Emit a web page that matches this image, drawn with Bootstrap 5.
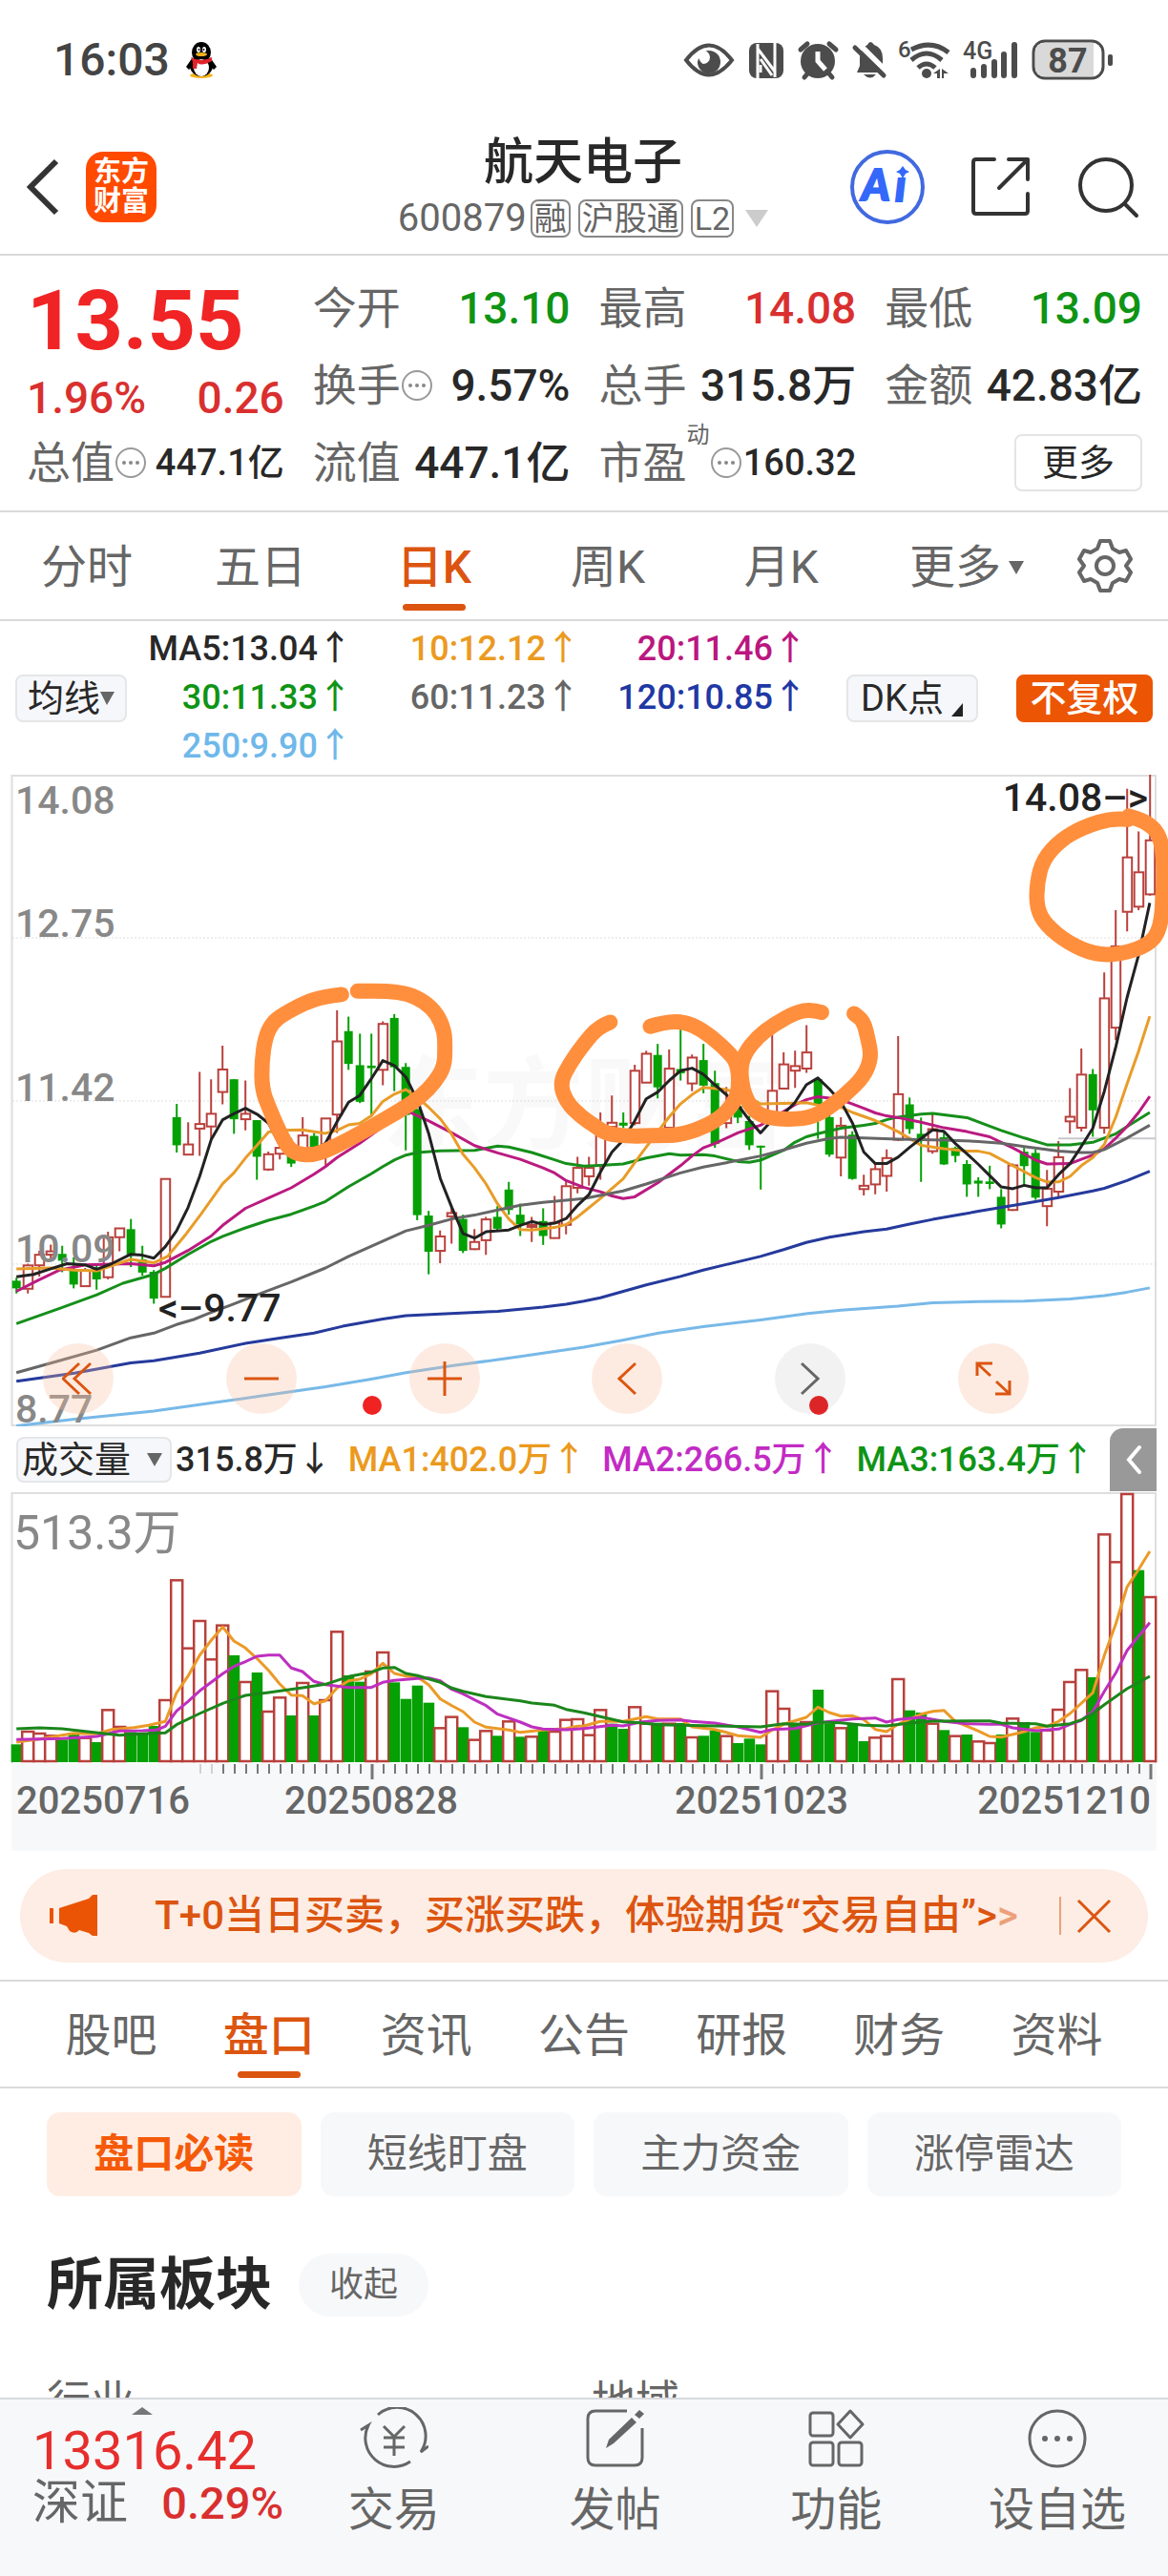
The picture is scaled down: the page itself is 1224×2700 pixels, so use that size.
<!DOCTYPE html>
<html lang="zh-CN">
<head>
<meta charset="utf-8">
<meta name="viewport" content="width=device-width, initial-scale=1">
<title>航天电子 600879</title>
<link rel="stylesheet" href="https://cdn.jsdelivr.net/npm/bootstrap@5.3.0/dist/css/bootstrap.min.css">
<style>
:root{--up:#d9302f;--down:#0f9415;--accent:#dc5510;--ink:#282828;--dim:#666}
body{font-family:Roboto,"Noto Sans CJK SC",sans-serif;color:var(--ink);background:#fff;line-height:1;overflow-x:hidden}
button{background:none;border:0;padding:0;color:inherit;font:inherit}
svg{display:block}
.scroller{overflow-y:auto;overflow-x:hidden;min-height:0;scrollbar-width:none}
.scroller::-webkit-scrollbar{display:none}
.rule-b{border-bottom:2px solid #dadada}
.t-dim{color:var(--dim)}.t-up{color:var(--up)}.t-down{color:var(--down)}
/* status bar and title bar */
.statusbar{height:126px;padding:0 56px;color:#444}
.clock{font-size:48px;font-weight:500}
.titlebar{height:142px;padding:0 30px 0 28px}
.side{width:300px}
.logo-tile{width:74px;height:74px;margin-left:27px;border-radius:18px;background:#ff4a00;color:#fff;font-size:29px;font-weight:700;line-height:31px}
.stock-name{font-size:52px;line-height:56px;font-weight:500;margin:0 0 10px}
.stock-code{font-size:40px}
.tag-box{font-size:34px;line-height:36px;border:2px solid #888;border-radius:8px;padding:0 2px}
/* quote */
.quote{gap:30px;padding:14px 27px 10px 28px;font-size:46px}
.quote>div{flex:1 1 0;min-width:0}
.qrow{height:81px;white-space:nowrap}
.num{font-weight:500}
.price{height:108px;font-size:88px;font-weight:700;color:#f02424}
.pct{height:54px}
.f-sm{font-size:38px}
.more-btn{border:2px solid #e4e4e4;border-radius:8px;width:134px;height:60px;font-size:38px}
/* tabs */
.tabs-k,.tabs-i{height:114px;font-size:48px}
.tabs-k a,.tabs-i a{position:relative;color:var(--dim);text-decoration:none;height:100%;padding-top:4px;display:flex;align-items:center;justify-content:center}
.tabs-k a{flex:0 0 calc((100% - 132px)/6)}
.tabs-i a{flex:1 1 0}
.tabs-k a.on,.tabs-i a.on{color:var(--accent);font-weight:500}
.on::after{content:"";position:absolute;left:50%;bottom:9px;width:66px;height:7px;margin-left:-33px;border-radius:4px;background:var(--accent)}
.gear{width:132px}
.tabs-i{padding:0 34px}
/* moving-average legend */
.legend-row{height:161px;padding:4px 16px}
.chip{height:50px;border:2px solid #e4e6e8;border-radius:8px;background:#f6f7fa;font-size:38px}
.chip-ma{width:117px}.chip-dk{width:138px}
.chip-fq{width:143px;background:#ec5503;border-color:#ec5503;color:#fff;font-weight:500}
.ma-grid{display:grid;grid-template-columns:236px 239px 238px;font-size:36px;line-height:51px;text-align:right;font-weight:500}
/* charts */
.chart-wrap{position:relative}
.chart-wrap svg text,.vol-wrap svg text{font-family:Roboto,"Noto Sans CJK SC",sans-serif}
.chart-tools{position:absolute;left:45px;right:146px;bottom:13px}
.chart-tools button{width:74px;height:74px;border-radius:50%;background:rgba(250,190,155,.3);display:flex;align-items:center;justify-content:center}
.chart-tools .off{background:rgba(0,0,0,.05)}
.vol-row{height:69px;padding:0 12px 0 17px;font-size:36px;white-space:nowrap}
.vol-select{width:163px;height:48px;border:2px solid #e4e6e8;border-radius:8px;background:#f6f7fa;font-size:38px}
.drawer{width:49px;height:66px;background:#999;border-radius:14px 0 0 0}
/* notice */
.notice{margin:19px 21px 18px;height:98px;border-radius:49px;background:#fdede4;color:var(--accent);font-size:42px;padding:0 38px 0 30px}
.notice a{color:inherit;text-decoration:none;white-space:nowrap;font-weight:500}
.section-rule{border-top:2px solid #dadada}
.pills{padding:25px 49px 0;gap:20px}
.pills button{flex:1 1 0;height:88px;border-radius:14px;background:#f7f8fa;color:var(--dim);font-size:42px}
.pills .sel{background:#ffede4;color:#f55a0a;font-weight:700}
.sector-head{padding:0 49px;margin-top:60px;gap:28px}
.sector-head h2{font-size:59px;font-weight:700;margin:0;line-height:66px}
.fold{width:136px;height:66px;border-radius:33px;background:#f7f8fa;color:var(--dim);font-size:36px}
.sector-cols{padding:0 49px;margin-top:66px;font-size:46px;line-height:46px}
/* bottom bar */
.dock{height:187px;background:#f7f8fa;border-top:2px solid #d8dade}
.dock-index{width:297px;padding:4px 0 0 34px}
.dock a{flex:1 1 0;color:var(--dim);text-decoration:none;font-size:48px;display:flex;flex-direction:column;align-items:center;gap:18px;padding-top:8px}
.idx{font-size:56px;line-height:56px;color:#e62e2c}
.idx-name{font-size:50px;line-height:52px}
.idx-pct{font-size:47px;color:var(--up);font-weight:500}
</style>
<script src="https://cdn.jsdelivr.net/npm/bootstrap@5.3.0/dist/js/bootstrap.bundle.min.js"></script>
</head>
<body>
<div class="d-flex flex-column vh-100">
<main class="scroller flex-grow-1">

<div class="statusbar d-flex align-items-center justify-content-between">
  <div class="d-flex align-items-center gap-3"><span class="clock">16:03</span>
    <svg width="34" height="38" viewBox="0 0 34 38" aria-hidden="true">
      <ellipse cx="17" cy="35" rx="12" ry="3" fill="#f5b21a"/>
      <path d="M8 16 L1 26 L4 29 L8 25Z M26 16 L33 26 L30 29 L26 25Z" fill="#000"/>
      <ellipse cx="17" cy="25" rx="12" ry="11" fill="#000"/><ellipse cx="17" cy="11" rx="10" ry="11" fill="#000"/>
      <ellipse cx="17" cy="27" rx="8" ry="9" fill="#fff"/>
      <path d="M6 16 Q17 22 28 16 V20 Q17 26 13 22 L12 28 H8 V21Z" fill="#e0222a"/>
      <ellipse cx="14" cy="8" rx="2" ry="3" fill="#fff"/><ellipse cx="20" cy="8" rx="2" ry="3" fill="#fff"/>
      <circle cx="14.500" cy="8" r="1" fill="#000"/><circle cx="19.500" cy="8" r="1" fill="#000"/>
      <ellipse cx="17" cy="13" rx="6" ry="2" fill="#f5b21a"/></svg>
  </div>
  <svg width="454" height="50" viewBox="0 0 454 50" fill="#4c4c4c" aria-hidden="true">
    <path d="M5 25 Q29 -6 53 25 Q29 56 5 25Z" fill="none" stroke="#4c4c4c" stroke-width="4"/>
    <circle cx="29" cy="27" r="12"/><circle cx="23" cy="22" r="7" fill="#fff"/>
    <path d="M18 23 A12 12 0 0 0 29 39 L31 31 Q22 32 18 23Z"/>
    <rect x="71" y="7" width="36" height="37" rx="8"/>
    <path d="M80 44 V8 M98 43 V7 M80 13 L98 37" fill="none" stroke="#fff" stroke-width="3"/><path d="M83 24 L95 41 M83 30 V38" stroke="#fff" stroke-width="3"/>
    <circle cx="143" cy="26" r="18"/><path d="M125 14 L132 8 M162 14 L155 8 M129 43 L134 37 M158 43 L153 37" stroke="#4c4c4c" stroke-width="5" stroke-linecap="round"/>
    <path d="M143 16 V26 L151 35" fill="none" stroke="#fff" stroke-width="5"/>
    <path d="M184 38 L187 31 V22 Q188 12 195 9 Q198 3 202 9 Q211 12 211 23 V30 L214 38Z"/><path d="M191 40 H204 Q198 47 191 40Z"/>
    <path d="M184 6 L215 37" stroke="#fff" stroke-width="6"/><path d="M182 12 L212 41" stroke="#4c4c4c" stroke-width="5" stroke-linecap="round"/>
    <text x="227" y="22" font-size="24" font-weight="500">6</text>
    <g fill="none" stroke="#4c4c4c" stroke-width="5"><path d="M241 14 Q262 3 280 17"/><path d="M241 25 Q257 11 273 25"/><path d="M248 33 Q257 25 266 33"/></g>
    <circle cx="257" cy="39" r="5"/><path d="M264 39 L271 34 V44 H268 V39Z M273 34 L280 39 H275 V44 H273Z"/>
    <text x="295" y="24" font-size="25" font-weight="500">4G</text>
    <path d="M306 36 V41 M317 32 V41 M328 27 V41 M338 19 V41 M349 9 V41" stroke="#4c4c4c" stroke-width="6" stroke-linecap="round"/>
    <rect x="369" y="5" width="73" height="39" rx="12" fill="#fff" stroke="#4c4c4c" stroke-width="3"/><path d="M381 7 H432 V42 H381 Q371 42 371 33 V16 Q371 7 381 7Z" fill="#d9d9d9"/>
    <rect x="447" y="19" width="5" height="12" rx="2"/><text x="405" y="38" font-size="36" font-weight="700" text-anchor="middle">87</text>
  </svg>
</div>

<header class="titlebar rule-b d-flex align-items-center justify-content-between">
  <div class="side d-flex align-items-center">
    <button aria-label="返回"><svg width="35" height="60" viewBox="0 0 35 60"><path d="M31 3 L4 30 L31 57" fill="none" stroke="#333" stroke-width="6"/></svg></button>
    <div class="logo-tile d-flex flex-column align-items-center justify-content-center"><span>东方</span><span>财富</span></div>
  </div>
  <div class="d-flex flex-column align-items-center">
    <h1 class="stock-name">航天电子</h1>
    <div class="d-flex align-items-center gap-1 t-dim">
      <span class="stock-code">600879</span><span class="tag-box">融</span><span class="tag-box ms-1">沪股通</span><span class="tag-box ms-1">L2</span>
      <svg class="ms-2" width="24" height="18"><path d="M0 0 H24 L12 18Z" fill="#ccc"/></svg>
    </div>
  </div>
  <div class="side d-flex align-items-center justify-content-end gap-5">
    <button aria-label="Ai"><svg width="80" height="80" viewBox="0 0 80 80"><circle cx="40" cy="40" r="37" fill="none" stroke="#4169e0" stroke-width="4"/><g font-family="Lato, sans-serif" font-weight="900" font-size="45" fill="#3468fa" stroke="#3468fa" stroke-width="2" font-style="italic"><text x="13" y="54">A</text><text x="48" y="55">ı</text></g><path d="M56 18 L59 22 L63 24 L59 26 L56 31 L53 26 L49 24 L53 22Z" fill="#3468fa"/></svg></button>
    <button aria-label="分享"><svg width="62" height="64" viewBox="0 0 62 64" fill="none" stroke="#333" stroke-width="4" stroke-linecap="round" stroke-linejoin="round"><path d="M24 3 H5 Q2 3 2 6 V57 Q2 60 5 60 H56 Q59 60 59 57 V39 M39 3 H59 V24 M59 3 L29 33"/></svg></button>
    <button aria-label="搜索"><svg width="66" height="66" viewBox="0 0 66 66" fill="none" stroke="#333" stroke-width="4" stroke-linecap="round"><circle cx="31" cy="31" r="27"/><path d="M51 51 L63 63"/></svg></button>
  </div>
</header>

<section class="quote rule-b d-flex">
  <div>
    <div class="price d-flex align-items-center">13.55</div>
    <div class="pct num d-flex align-items-center justify-content-between t-up"><span>1.96%</span><span>0.26</span></div>
    <div class="qrow d-flex align-items-center"><span class="t-dim">总值</span><svg width="34" height="34" viewBox="0 0 34 34"><use href="#info"/></svg><span class="num f-sm ms-auto">447.1亿</span></div>
  </div>
  <div>
    <div class="qrow d-flex align-items-center justify-content-between"><span class="t-dim">今开</span><span class="num t-down">13.10</span></div>
    <div class="qrow d-flex align-items-center"><span class="t-dim">换手</span><svg width="34" height="34" viewBox="0 0 34 34"><use href="#info"/></svg><span class="num ms-auto">9.57%</span></div>
    <div class="qrow d-flex align-items-center justify-content-between"><span class="t-dim">流值</span><span class="num">447.1亿</span></div>
  </div>
  <div>
    <div class="qrow d-flex align-items-center justify-content-between"><span class="t-dim">最高</span><span class="num t-up">14.08</span></div>
    <div class="qrow d-flex align-items-center justify-content-between"><span class="t-dim">总手</span><span class="num">315.8万</span></div>
    <div class="qrow d-flex align-items-center"><span class="t-dim">市盈</span><span class="t-dim align-self-start fs-4">动</span><svg width="34" height="34" viewBox="0 0 34 34"><use href="#info"/></svg><span class="num f-sm ms-auto">160.32</span></div>
  </div>
  <div>
    <div class="qrow d-flex align-items-center justify-content-between"><span class="t-dim">最低</span><span class="num t-down">13.09</span></div>
    <div class="qrow d-flex align-items-center justify-content-between"><span class="t-dim">金额</span><span class="num">42.83亿</span></div>
    <div class="qrow d-flex align-items-center justify-content-end"><button class="more-btn">更多</button></div>
  </div>
</section>
<svg width="0" height="0" aria-hidden="true"><defs><g id="info"><circle cx="17" cy="17" r="15" fill="none" stroke="#999" stroke-width="2"/><circle cx="10" cy="17" r="2" fill="#888"/><circle cx="17" cy="17" r="2" fill="#888"/><circle cx="24" cy="17" r="2" fill="#888"/></g></defs></svg>

<nav class="tabs-k rule-b d-flex align-items-center">
  <a href="#">分时</a>
  <a href="#">五日</a>
  <a href="#" class="on">日K</a>
  <a href="#">周K</a>
  <a href="#">月K</a>
  <a href="#" class="ps-4">更多<svg class="ms-2" width="16" height="14"><path d="M0 0 H16 L8 14Z" fill="#666"/></svg></a>
  <button class="gear flex-shrink-0 d-flex justify-content-center" aria-label="设置"><svg width="58" height="58" viewBox="0 0 58 58" fill="none" stroke="#666" stroke-width="4" stroke-linejoin="round"><path d="M24 3 H34 L37 11 L44 15 L51 13 L56 22 L51 29 L56 36 L51 45 L44 43 L37 47 L34 55 H24 L21 47 L14 43 L7 45 L2 36 L7 29 L2 22 L7 13 L14 15 L21 11Z"/><circle cx="29" cy="29" r="9"/></svg></button>
</nav>

<section class="legend-row d-flex align-items-center">
  <button class="chip chip-ma d-flex align-items-center justify-content-center">均线<svg width="15" height="14"><path d="M0 0 H15 L7 14Z" fill="#666"/></svg></button>
  <div class="ma-grid">
    <span>MA5:13.04↑</span><span style="color:#eb9a1e">10:12.12↑</span><span style="color:#bb167f">20:11.46↑</span>
    <span class="t-down">30:11.33↑</span><span class="t-dim">60:11.23↑</span><span style="color:#2038a4">120:10.85↑</span>
    <span style="color:#6fb8ea">250:9.90↑</span>
  </div>
  <button class="chip chip-dk ms-auto d-flex align-items-center justify-content-center gap-2">DK点<svg class="align-self-end mb-1" width="12" height="14"><path d="M12 0 V14 H0Z" fill="#222"/></svg></button>
  <button class="chip chip-fq ms-auto">不复权</button>
</section>

<section class="chart-wrap">
  <svg id="kline" class="w-100" viewBox="0 0 1224 683" role="img" aria-label="日K线"></svg>
  <div class="chart-tools d-flex justify-content-between">
    <button aria-label="最左"><svg width="34" height="36" viewBox="0 0 34 36" fill="none" stroke="#dc5510" stroke-width="3"><path d="M18 2 L1 18 L18 34 M30 2 L13 18 L30 34"/></svg></button>
    <button aria-label="缩小"><svg width="36" height="36" stroke="#dc5510" stroke-width="3"><path d="M0 18 H36"/></svg></button>
    <button aria-label="放大"><svg width="36" height="36" stroke="#dc5510" stroke-width="3"><path d="M0 18 H36 M18 0 V36"/></svg></button>
    <button aria-label="左移"><svg width="20" height="36" viewBox="0 0 20 36" fill="none" stroke="#dc5510" stroke-width="3"><path d="M19 2 L2 18 L19 34"/></svg></button>
    <button class="off" aria-label="右移"><svg width="20" height="36" viewBox="0 0 20 36" fill="none" stroke="#666" stroke-width="3"><path d="M1 2 L18 18 L1 34"/></svg></button>
    <button aria-label="全屏"><svg width="38" height="38" viewBox="0 0 38 38" fill="none" stroke="#dc5510" stroke-width="3"><path d="M2 16 V3 H18 M2 3 L16 16 M36 21 V35 H21 M36 35 L22 22"/></svg></button>
  </div>
</section>

<section class="vol-row d-flex align-items-center">
  <button class="vol-select flex-shrink-0 d-flex align-items-center justify-content-between px-1">成交量<svg class="me-1" width="16" height="14"><path d="M0 0 H16 L8 14Z" fill="#666"/></svg></button>
  <div class="num d-flex flex-grow-1 justify-content-between ps-1 pe-3"><span>315.8万↓</span><span style="color:#eb9a1e">MA1:402.0万↑</span><span style="color:#c22bc4">MA2:266.5万↑</span><span class="t-down">MA3:163.4万↑</span></div>
  <button class="drawer flex-shrink-0 d-flex align-items-center justify-content-center" aria-label="展开"><svg width="18" height="32" viewBox="0 0 18 32"><path d="M15 3 L4 16 L15 29" fill="none" stroke="#fff" stroke-width="4" stroke-linecap="round"/></svg></button>
</section>

<section class="vol-wrap">
  <svg id="volume" class="w-100" viewBox="0 0 1224 376" role="img" aria-label="成交量"></svg>
</section>

<aside class="notice d-flex align-items-center">
  <svg width="52" height="44" viewBox="0 0 52 44" fill="#ea5404"><rect x="1" y="14" width="4" height="16"/><path d="M11 14 L42 4 L46 0 H51 V43 H46 L42 40 L32 37 Q28 42 22 38 L19 33 L11 30Z"/></svg>
  <a href="#" class="flex-grow-1 text-center ps-3">T+0当日买卖，买涨买跌，体验期货“交易自由”&gt;<span class="opacity-50">&gt;</span></a>
  <button class="d-flex align-items-center" aria-label="关闭"><svg width="55" height="40" viewBox="0 0 55 40" stroke="#dc5510" fill="none"><path d="M1 0 V40" stroke-width="1"/><path d="M20 4 L53 37 M53 4 L20 37" stroke-width="3"/></svg></button>
</aside>

<nav class="tabs-i section-rule rule-b d-flex">
  <a href="#">股吧</a>
  <a href="#" class="on">盘口</a>
  <a href="#">资讯</a>
  <a href="#">公告</a>
  <a href="#">研报</a>
  <a href="#">财务</a>
  <a href="#">资料</a>
</nav>
<div class="pills d-flex"><button class="sel">盘口必读</button><button>短线盯盘</button><button>主力资金</button><button>涨停雷达</button></div>
<div class="sector-head d-flex align-items-center"><h2>所属板块</h2><button class="fold">收起</button></div>
<div class="sector-cols d-flex t-dim"><span class="w-50">行业</span><span class="w-50 ps-2">地域</span></div>
</main>

<footer class="dock d-flex flex-shrink-0">
  <div class="dock-index flex-shrink-0">
    <svg width="262" height="22"><path d="M104 12 L115 4 L126 12Z" fill="#777"/></svg>
    <div class="idx">13316.42</div>
    <div class="d-flex align-items-center"><span class="idx-name t-dim">深证</span><span class="idx-pct ms-auto">0.29%</span></div>
  </div>
  <a href="#"><svg width="72" height="66" viewBox="0 0 72 66" fill="none" stroke="#666" stroke-width="3"><path d="M19 8 A30 30 0 0 1 64 47 L72 41 M53 57 A30 30 0 0 1 9 19 L1 24"/><path d="M25 20 L36 31 L47 20 M36 31 V51 M25 32 H47 M25 42 H47"/></svg><span>交易</span></a>
  <a href="#"><svg width="62" height="66" viewBox="0 0 62 66" fill="none" stroke="#666" stroke-width="3"><path d="M43 4 H10 Q2 4 2 12 V53 Q2 61 10 61 H51 Q59 61 59 53 V22"/><path d="M21 43 L24 34 L48 11 L53 16 L29 38Z M51 8 L56 3 L61 7 L56 12Z" fill="#666" stroke="none"/></svg><span>发帖</span></a>
  <a href="#"><svg width="60" height="66" viewBox="0 0 60 66" fill="none" stroke="#666" stroke-width="3" stroke-linejoin="round"><rect x="3" y="6" width="24" height="24" rx="3"/><rect x="3" y="37" width="24" height="24" rx="3"/><rect x="33" y="37" width="24" height="24" rx="3"/><path d="M45 4 L58 18 L45 32 L32 18Z"/></svg><span>功能</span></a>
  <a href="#"><svg width="66" height="66" viewBox="0 0 66 66"><circle cx="33" cy="33" r="29" fill="none" stroke="#666" stroke-width="3"/><g fill="#666"><circle cx="20" cy="33" r="3"/><circle cx="33" cy="33" r="3"/><circle cx="46" cy="33" r="3"/></g></svg><span>设自选</span></a>
</footer>
</div>

<script>
// One entry per trading day: direction, high, body top, body bottom, low (plot units, downwards).
const days = `G1208,1215,1233,1245 R1175,1178,1235,1245 R1145,1153,1180,1205 R1130,1145,1155,1168 G1133,1152,1168,1195 G1160,1188,1224,1233 R1185,1190,1229,1229 G1175,1185,1212,1236 R1100,1112,1208,1212 R1091,1091,1114,1146
G1070,1094,1155,1183 G1133,1165,1196,1203 G1190,1194,1257,1269 R975,975,1254,1254 G800,831,897,914 R843,894,920,920 R725,846,859,922 R742,822,854,882 R663,718,773,801 G742,742,836,870
R745,822,837,862 G838,838,924,978 R912,917,955,957 R895,902,918,930 G880,900,940,948 R831,873,915,925 G868,875,905,915 R833,833,900,945 R580,652,826,868 G595,629,706,720
G635,709,795,798 G635,710,716,830 R606,611,721,756 G589,598,714,770 G704,713,826,909 G812,812,1061,1073 G1051,1062,1147,1200 R1097,1110,1146,1174 R1040,1055,1065,1128 G1060,1070,1145,1150
R1094,1123,1142,1143 R1065,1070,1121,1154 G1040,1065,1093,1096 G983,1001,1049,1060 G1034,1060,1083,1110 R1065,1083,1088,1124 G1045,1075,1110,1131 R1016,1078,1116,1117 R980,992,1085,1106 R924,949,998,1010
R924,949,971,992 R820,860,945,978 R780,843,855,870 G820,844,851,856 R708,721,846,850 R675,681,751,751 G659,685,761,787 R672,716,857,857 G618,718,728,745 R684,690,753,770
G659,697,757,775 G722,751,894,903 R760,820,846,857 G780,805,832,845 G828,840,897,908 G898,898,900,1001 R630,768,830,838 R679,706,765,766 R675,710,723,762 R615,678,718,727
G742,742,802,882 G825,831,919,924 R831,850,927,970 G864,872,976,978 R966,991,1001,1015 R940,952,990,1012 R907,926,970,1006 R641,776,885,887 G785,801,859,870 G832,870,882,983
R822,858,912,917 G864,878,942,943 G900,903,922,937 G932,941,989,1018 G972,980,987,1018 G945,982,988,1000 G1000,1018,1083,1092 R940,943,1050,1051 G903,912,946,990 G907,915,1020,1025
R955,998,1041,1087 R887,924,1007,1020 R763,829,842,869 R670,730,857,865 G718,730,815,877 R491,551,857,870 R345,429,622,650 R60,220,350,395 R160,255,338,345 R27,180,309,311`.split(/\s+/);
const vols = `G1015 R972 R978 R985 G1000 G978 R992 G1008 R904 R957 G976 G980 G957 R873 R496 R710 R624 R745 R638 G735 R816 G789 R909 R865 G924 R819 G924 R873 R658 G798 G818 R783 R723 G820 G872 G830 G884 R961 R926 G961 R998 R970 G988 R940 G991 R988 G964 R972 R935 R933
R983 R904 G950 G966 R895 R947 G947 R947 G948 R990 G988 G972 R986 G1011 G997 G1015 R845 R900 G950 R942 G843 G950 R961 G950 G1005 R991 R986 R807 G908 G915 R947 G970 R986 G984 R1003 R1008 G984 R931 G945 G976 R968 R903 R816 R778 G804 R352 R439 R225 G467 R549`.split(/\s+/);
// Lines are written as two half-plots "left | right", each as x,y pairs.
const HALF = 1568, SX = 2.562;
const expand = (s, fy) => s.split('|').flatMap((part, h) => part.trim().split(/\s+/).map(p => {
  const [x, y] = p.split(',').map(Number); return ((x + h * HALF) / SX).toFixed(1) + ',' + fy(y).toFixed(1); })).join(' ');
const py = v => (v - 27) / 2.24, vy = v => (v - 222) / 3;
const RED = '#b8403c', GREEN = '#04a004';
const line = (s, c, fy) => `<polyline points="${expand(s, fy)}" fill="none" stroke="${c}" stroke-width="3" stroke-linejoin="round"/>`;

let k = '';
k += '<text x="612" y="384" font-size="106" font-weight="700" text-anchor="middle" fill="#000" fill-opacity=".025">东方财富</text>';
k += '<path d="M12.500 683 V1 H1211 V682 H12.500" fill="none" stroke="#dedede" stroke-width="2"/>';
[410, 793, 1176].forEach(v => k += `<path d="M13 ${py(v)} H1211" stroke="#ddd" stroke-width="1" stroke-dasharray="2 2"/>`);
k += `<path d="M1109 ${py(881)} H1211" stroke="#c8c8cd" stroke-width="2"/>`;
days.forEach((d, i) => {
  const [h, t, b, l] = d.slice(1).split(',').map(Number), x = 17.2 + 12 * i, up = d[0] === 'R', c = up ? RED : GREEN;
  if (up) k += `<path d="M${x} ${py(h)} V${py(t)} M${x} ${py(b)} V${py(l)}" stroke="${c}" stroke-width="2"/><rect x="${x - 4.5}" y="${py(t) + .5}" width="9.500" height="${Math.max(py(b) - py(t) - 1, 2)}" fill="#fff" stroke="${c}" stroke-width="2"/>`;
  else k += `<path d="M${x} ${py(h)} V${py(l)}" stroke="${c}" stroke-width="2"/><rect x="${x - 4.5}" y="${py(t)}" width="9" height="${Math.max(py(b) - py(t), 2)}" fill="${c}"/>`;
});
k += line('44,1556 200,1540 413,1521 567,1502 690,1487 874,1464 997,1446 1090,1431 1213,1415 1397,1393 1568,1371 | 100,1355 200,1338 320,1323 474,1307 600,1292 690,1284 843,1275 936,1267 1059,1264 1182,1263 1305,1258 1397,1250 1458,1242 1519,1232', '#78b9e8', py);
k += line('44,1451 200,1432 351,1408 413,1403 536,1385 659,1362 751,1350 843,1338 920,1322 1028,1305 1090,1297 1182,1293 1336,1287 1458,1277 1520,1270 1568,1263 | 44,1255 167,1225 259,1205 320,1190 382,1177 474,1158 536,1142 597,1125 659,1113 751,1100 812,1094 874,1082 936,1071 1059,1052 1182,1034 1274,1020 1366,1004 1397,998 1458,980 1519,958', '#253a9c', py);
k += line('44,1316 160,1280 260,1248 330,1221 413,1200 444,1186 505,1153 567,1123 598,1111 659,1091 721,1073 782,1059 843,1040 874,1029 936,994 997,964 1028,947 1060,931 1090,920 1121,914 1182,910 1274,909 1305,904 1336,899 1366,901 1428,914 1489,931 1520,940 1568,946 | 44,944 105,941 167,927 229,917 259,920 320,919 351,922 413,935 444,937 474,932 536,909 566,890 597,877 628,870 690,857 751,850 782,846 812,837 843,831 905,824 936,822 1028,832 1089,852 1120,862 1182,880 1243,896 1305,896 1366,890 1428,870 1458,853 1519,820', '#158f1a', py);
k += line('44,1240 100,1215 160,1190 229,1178 351,1175 413,1180 444,1172 505,1144 567,1110 598,1085 659,1045 721,1021 782,997 843,965 874,947 905,926 966,892 1028,853 1060,825 1090,815 1151,840 1213,868 1274,898 1336,915 1397,930 1458,950 1489,962 1520,980 1568,996 | 44,1006 75,1016 105,1022 136,1018 198,985 259,945 290,922 320,903 351,893 413,868 474,850 505,833 536,818 566,802 597,790 628,783 690,790 751,810 782,821 812,828 843,832 905,843 966,856 1028,865 1089,877 1120,890 1151,903 1213,932 1243,941 1305,940 1335,930 1366,920 1397,905 1428,880 1458,853 1489,820 1519,782', '#bb1a80', py);
k += line('44,1187 136,1185 198,1190 260,1192 300,1180 351,1165 413,1173 450,1158 500,1105 540,1058 598,987 628,962 659,927 690,897 721,866 751,862 812,861 874,869 905,862 936,849 966,846 997,828 1028,794 1059,777 1090,766 1121,785 1151,808 1182,835 1213,872 1243,918 1274,950 1305,988 1336,1035 1366,1070 1397,1095 1428,1096 1489,1090 1520,1083 1551,1065 | 0,1053 44,1022 105,976 151,920 198,865 229,830 259,800 290,778 320,761 382,766 444,785 474,800 566,798 597,797 628,803 690,808 721,820 782,839 843,865 905,897 966,905 1028,911 1059,911 1089,916 1151,945 1213,973 1243,983 1274,983 1305,970 1335,945 1366,926 1397,895 1428,830 1458,753 1489,676 1519,594', '#e89c28', py);
k += line('44,1431 150,1405 260,1378 351,1349 413,1338 474,1318 520,1306 560,1292 620,1272 690,1248 782,1218 874,1185 936,1158 1028,1122 1090,1098 1151,1085 1213,1070 1274,1061 1336,1049 1397,1038 1458,1031 1568,1022 | 105,1004 167,988 259,962 320,948 382,938 474,922 536,908 597,892 659,881 690,878 751,880 843,883 966,885 1059,888 1120,892 1182,900 1274,911 1335,914 1366,914 1397,907 1458,880 1519,850', '#666', py);
k += line('44,1206 90,1200 136,1187 180,1175 229,1178 260,1188 300,1175 351,1153 382,1155 413,1162 444,1135 474,1098 505,1043 536,970 567,884 598,837 628,823 659,810 690,824 721,845 751,895 782,925 812,930 843,912 874,892 905,842 936,796 966,780 997,741 1028,698 1059,710 1090,737 1121,792 1151,870 1182,975 1213,1043 1243,1104 1274,1115 1305,1100 1366,1096 1397,1085 1428,1076 1458,1083 1489,1080 1520,1069 1551,1038 | 13,1013 44,960 75,913 105,885 136,840 167,788 198,772 229,745 259,722 290,716 320,730 351,755 382,778 413,802 444,838 474,868 505,838 536,823 566,797 597,755 628,739 659,765 690,795 721,845 751,913 782,940 812,940 843,925 874,902 905,881 936,861 966,864 997,893 1028,917 1059,942 1089,968 1120,995 1151,999 1182,991 1213,997 1243,997 1274,966 1305,940 1335,900 1366,857 1397,770 1428,665 1458,550 1489,450 1519,328', '#222', py);
[['14.08', 41], ['12.75', 170], ['11.42', 342], ['10.09', 511], ['8.77', 679]].forEach(([t, y]) => k += `<text x="16" y="${y}" font-size="41" font-weight="500" fill="#888">${t}</text>`);
k += '<text x="166" y="573" font-size="41" font-weight="500" fill="#222">&lt;–9.77</text><text x="1203" y="38" font-size="41" font-weight="500" fill="#222" text-anchor="end">14.08–&gt;</text>';
k += '<circle cx="390" cy="661" r="10" fill="#f02222"/><circle cx="858" cy="661" r="10" fill="#e8282a"/>';
// hand-drawn rings
const smooth = s => { const p = expand(s, py).split(' ').map(a => a.split(',').map(Number)); let d = `M${p[0]}`;
  for (let i = 1; i < p.length - 1; i++) d += ` Q${p[i]} ${(p[i][0] + p[i + 1][0]) / 2},${(p[i][1] + p[i + 1][1]) / 2}`;
  return d + ` L${p[p.length - 1]}`; };
['917,543 870,548 820,562 760,590 730,610 712,645 703,700 703,765 725,815 750,865 775,905 800,918 840,920 880,908 940,882 1010,848 1080,812 1130,783 1168,748 1193,712 1195,665 1193,630 1175,590 1140,560 1095,541 1040,535 960,535',
 '1638,608 1608,618 1568,658 1530,705 1503,750 1520,795 1560,830 1598,852 1628,870 1688,876 1768,874 1813,874 1868,862 1928,837 1970,800 1985,760 1980,705 1958,680 1908,640 1858,613 1818,606 1778,610 1746,618',
 '2206,585 2180,578 2138,584 2078,613 2033,643 1998,683 1987,720 1996,775 2023,817 2068,835 2158,836 2208,820 2268,780 2320,735 2340,690 2330,645 2318,605 2293,588',
 '3028,132 2988,128 2908,150 2848,180 2801,225 2784,280 2783,340 2808,380 2868,422 2938,449 3008,449 3083,427 3116,390 3124,300 3124,220 3112,165 3078,138 3030,124'
].forEach(s => k += `<path d="${smooth(s)}" fill="none" stroke="#ff8f3d" stroke-width="16" stroke-linecap="round" stroke-linejoin="round"/>`);
document.getElementById('kline').innerHTML = k;

let v = '<rect x="12" y="284" width="1200" height="92" fill="#f7f8fa"/><path d="M12.500 284 V1 H1211 V284" fill="none" stroke="#dedede" stroke-width="2"/>';
v += '<text x="14" y="60" font-size="50" fill="#888">513.3万</text>';
vols.forEach((d, i) => {
  const t = vy(+d.slice(1)), x = 17.2 + 12 * i;
  v += d[0] === 'R' ? `<rect x="${x - 6}" y="${t + 1}" width="12" height="${281 - t}" fill="#fff" stroke="${RED}" stroke-width="2.500"/>` : `<rect x="${x - 5.5}" y="${t}" width="11.500" height="${283 - t}" fill="${GREEN}"/>`;
});
v += line('44,1008 106,998 136,992 198,980 260,982 300,968 360,962 400,955 444,943 474,853 505,800 536,735 567,688 598,646 628,690 659,712 690,745 721,782 751,825 782,860 812,862 843,887 874,878 905,838 936,815 966,810 997,793 1028,760 1059,792 1090,800 1121,803 1151,828 1182,872 1213,893 1243,912 1274,945 1305,961 1366,970 1397,977 1458,970 1520,965 1551,958 | 0,957 44,943 105,943 136,935 167,928 198,935 259,935 290,960 351,968 382,977 413,988 474,993 505,970 536,952 597,930 628,898 659,915 690,926 721,925 751,937 782,968 812,975 843,952 905,920 936,911 966,908 997,943 1059,973 1089,990 1120,992 1182,975 1213,963 1243,958 1274,943 1305,918 1366,853 1397,735 1428,635 1458,520 1489,465 1519,408', '#eb9a28', vy);
v += line('44,1000 167,997 260,990 321,973 382,972 420,970 444,958 474,910 505,880 536,847 567,820 598,793 628,770 659,755 690,738 721,734 751,734 782,775 812,786 843,817 874,827 936,836 997,836 1028,820 1059,814 1121,808 1151,806 1182,815 1213,842 1243,856 1274,875 1305,893 1336,920 1397,945 1428,960 1458,967 1520,969 1568,965 | 75,955 105,957 151,945 198,940 259,938 290,943 351,948 413,960 474,977 505,968 566,965 628,947 721,935 782,932 812,945 843,937 905,930 966,943 1028,950 1089,952 1120,952 1151,963 1213,972 1274,967 1305,952 1335,940 1366,912 1397,848 1428,790 1458,720 1489,675 1519,632', '#be2fc0', vy);
v += line('44,966 106,963 167,966 229,974 321,986 382,982 444,979 474,953 536,918 598,886 659,861 721,852 812,837 874,826 936,802 997,788 1028,775 1059,773 1090,792 1121,799 1182,820 1213,838 1243,848 1305,865 1397,878 1428,885 1489,892 1520,905 1568,916 | 44,928 105,944 151,947 198,953 351,957 474,960 536,950 597,952 628,945 690,947 751,955 812,957 874,948 936,942 1089,941 1120,948 1213,950 1243,958 1305,950 1335,938 1366,918 1397,890 1458,840 1519,801', '#1b861b', vy);
for (let i = 16; i < 100; i++) {
  const long = i === 31 || i === 65 || i === 99;
  v += `<path d="M${18 + 12 * i} 285 V${long ? 301 : 295}" stroke="#777" stroke-width="${long ? 3 : 2}" opacity="${i < 18 ? .3 : 1}"/>`;
}
[['20250716', 17, 'start'], ['20250828', 389, 'middle'], ['20251023', 798, 'middle'], ['20251210', 1206, 'end']].forEach(([t, x, a]) => v += `<text x="${x}" y="337" font-size="40" font-weight="500" fill="#666" text-anchor="${a}">${t}</text>`);
document.getElementById('volume').innerHTML = v;
</script>
</body>
</html>
